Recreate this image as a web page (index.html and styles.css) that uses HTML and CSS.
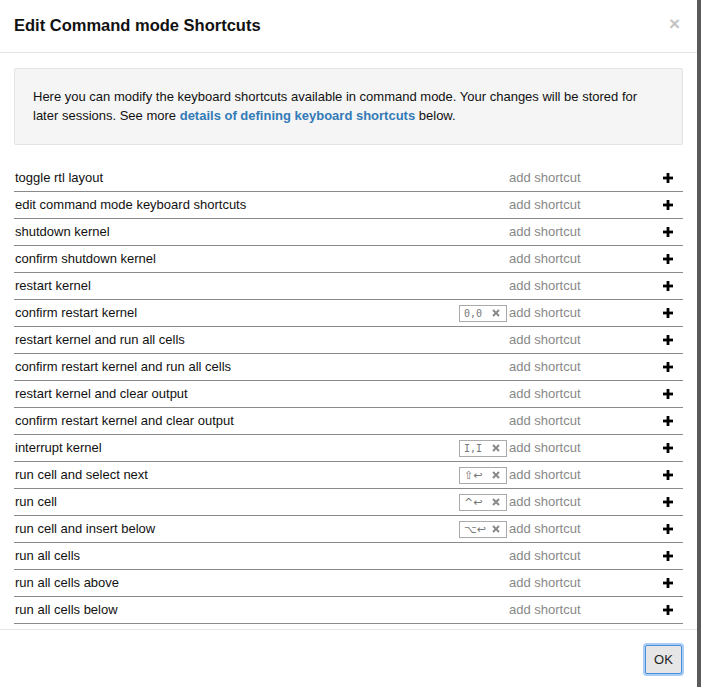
FILE: index.html
```html
<!DOCTYPE html>
<html>
<head>
<meta charset="utf-8">
<link rel="stylesheet" href="styles.css">
</head>
<body>
<div class="page">
  <div class="modal">
    <div class="modal-header">
      <h4 class="modal-title">Edit Command mode Shortcuts</h4>
      <span class="close">×</span>
    </div>
    <div class="modal-body">
      <div class="well">Here you can modify the keyboard shortcuts available in command mode. Your changes will be stored for later sessions. See more <a class="link">details of defining keyboard shortcuts</a> below.</div>
      <div class="list">
        <div class="row"><span class="desc">toggle rtl layout</span><span class="add">add shortcut</span><span class="plus"><svg viewBox="0 0 10 10" width="10" height="10"><rect x="3.6" y="0" width="2.8" height="10" fill="#000"/><rect x="0" y="3.6" width="10" height="2.8" fill="#000"/></svg></span></div>
        <div class="row"><span class="desc">edit command mode keyboard shortcuts</span><span class="add">add shortcut</span><span class="plus"><svg viewBox="0 0 10 10" width="10" height="10"><rect x="3.6" y="0" width="2.8" height="10" fill="#000"/><rect x="0" y="3.6" width="10" height="2.8" fill="#000"/></svg></span></div>
        <div class="row"><span class="desc">shutdown kernel</span><span class="add">add shortcut</span><span class="plus"><svg viewBox="0 0 10 10" width="10" height="10"><rect x="3.6" y="0" width="2.8" height="10" fill="#000"/><rect x="0" y="3.6" width="10" height="2.8" fill="#000"/></svg></span></div>
        <div class="row"><span class="desc">confirm shutdown kernel</span><span class="add">add shortcut</span><span class="plus"><svg viewBox="0 0 10 10" width="10" height="10"><rect x="3.6" y="0" width="2.8" height="10" fill="#000"/><rect x="0" y="3.6" width="10" height="2.8" fill="#000"/></svg></span></div>
        <div class="row"><span class="desc">restart kernel</span><span class="add">add shortcut</span><span class="plus"><svg viewBox="0 0 10 10" width="10" height="10"><rect x="3.6" y="0" width="2.8" height="10" fill="#000"/><rect x="0" y="3.6" width="10" height="2.8" fill="#000"/></svg></span></div>
        <div class="row"><span class="desc">confirm restart kernel</span><span class="key"><kbd>0,0</kbd><svg class="x" viewBox="0 0 8 8" width="8" height="8"><path d="M1 1L7 7M7 1L1 7" stroke="#8a8a8a" stroke-width="2"/></svg></span><span class="add">add shortcut</span><span class="plus"><svg viewBox="0 0 10 10" width="10" height="10"><rect x="3.6" y="0" width="2.8" height="10" fill="#000"/><rect x="0" y="3.6" width="10" height="2.8" fill="#000"/></svg></span></div>
        <div class="row"><span class="desc">restart kernel and run all cells</span><span class="add">add shortcut</span><span class="plus"><svg viewBox="0 0 10 10" width="10" height="10"><rect x="3.6" y="0" width="2.8" height="10" fill="#000"/><rect x="0" y="3.6" width="10" height="2.8" fill="#000"/></svg></span></div>
        <div class="row"><span class="desc">confirm restart kernel and run all cells</span><span class="add">add shortcut</span><span class="plus"><svg viewBox="0 0 10 10" width="10" height="10"><rect x="3.6" y="0" width="2.8" height="10" fill="#000"/><rect x="0" y="3.6" width="10" height="2.8" fill="#000"/></svg></span></div>
        <div class="row"><span class="desc">restart kernel and clear output</span><span class="add">add shortcut</span><span class="plus"><svg viewBox="0 0 10 10" width="10" height="10"><rect x="3.6" y="0" width="2.8" height="10" fill="#000"/><rect x="0" y="3.6" width="10" height="2.8" fill="#000"/></svg></span></div>
        <div class="row"><span class="desc">confirm restart kernel and clear output</span><span class="add">add shortcut</span><span class="plus"><svg viewBox="0 0 10 10" width="10" height="10"><rect x="3.6" y="0" width="2.8" height="10" fill="#000"/><rect x="0" y="3.6" width="10" height="2.8" fill="#000"/></svg></span></div>
        <div class="row"><span class="desc">interrupt kernel</span><span class="key"><kbd>I,I</kbd><svg class="x" viewBox="0 0 8 8" width="8" height="8"><path d="M1 1L7 7M7 1L1 7" stroke="#8a8a8a" stroke-width="2"/></svg></span><span class="add">add shortcut</span><span class="plus"><svg viewBox="0 0 10 10" width="10" height="10"><rect x="3.6" y="0" width="2.8" height="10" fill="#000"/><rect x="0" y="3.6" width="10" height="2.8" fill="#000"/></svg></span></div>
        <div class="row"><span class="desc">run cell and select next</span><span class="key"><kbd class="sym">⇧↩</kbd><svg class="x" viewBox="0 0 8 8" width="8" height="8"><path d="M1 1L7 7M7 1L1 7" stroke="#8a8a8a" stroke-width="2"/></svg></span><span class="add">add shortcut</span><span class="plus"><svg viewBox="0 0 10 10" width="10" height="10"><rect x="3.6" y="0" width="2.8" height="10" fill="#000"/><rect x="0" y="3.6" width="10" height="2.8" fill="#000"/></svg></span></div>
        <div class="row"><span class="desc">run cell</span><span class="key"><kbd class="sym">^↩</kbd><svg class="x" viewBox="0 0 8 8" width="8" height="8"><path d="M1 1L7 7M7 1L1 7" stroke="#8a8a8a" stroke-width="2"/></svg></span><span class="add">add shortcut</span><span class="plus"><svg viewBox="0 0 10 10" width="10" height="10"><rect x="3.6" y="0" width="2.8" height="10" fill="#000"/><rect x="0" y="3.6" width="10" height="2.8" fill="#000"/></svg></span></div>
        <div class="row"><span class="desc">run cell and insert below</span><span class="key"><kbd class="sym">⌥↩</kbd><svg class="x" viewBox="0 0 8 8" width="8" height="8"><path d="M1 1L7 7M7 1L1 7" stroke="#8a8a8a" stroke-width="2"/></svg></span><span class="add">add shortcut</span><span class="plus"><svg viewBox="0 0 10 10" width="10" height="10"><rect x="3.6" y="0" width="2.8" height="10" fill="#000"/><rect x="0" y="3.6" width="10" height="2.8" fill="#000"/></svg></span></div>
        <div class="row"><span class="desc">run all cells</span><span class="add">add shortcut</span><span class="plus"><svg viewBox="0 0 10 10" width="10" height="10"><rect x="3.6" y="0" width="2.8" height="10" fill="#000"/><rect x="0" y="3.6" width="10" height="2.8" fill="#000"/></svg></span></div>
        <div class="row"><span class="desc">run all cells above</span><span class="add">add shortcut</span><span class="plus"><svg viewBox="0 0 10 10" width="10" height="10"><rect x="3.6" y="0" width="2.8" height="10" fill="#000"/><rect x="0" y="3.6" width="10" height="2.8" fill="#000"/></svg></span></div>
        <div class="row"><span class="desc">run all cells below</span><span class="add">add shortcut</span><span class="plus"><svg viewBox="0 0 10 10" width="10" height="10"><rect x="3.6" y="0" width="2.8" height="10" fill="#000"/><rect x="0" y="3.6" width="10" height="2.8" fill="#000"/></svg></span></div>
      </div>
    </div>
    <div class="modal-footer">
      <button class="btn">OK</button>
    </div>
  </div>
</div>
</body>
</html>
```
FILE: styles.css
```css
html, body {
  margin: 0;
  padding: 0;
}
body {
  background: #5a5a5a;
  font-family: "Liberation Sans", Arial, sans-serif;
  font-size: 13px;
  line-height: 1.42857;
  color: #222;
}
.page {
  width: 701px;
  height: 687px;
  overflow: hidden;
  display: flex;
}
.modal {
  width: 697px;
  height: 687px;
  background: #fff;
  display: flex;
  flex-direction: column;
}
.modal-header {
  display: flex;
  justify-content: space-between;
  align-items: flex-start;
  padding: 12px 15px 14px 14px;
  border-bottom: 1px solid #e5e5e5;
}
.modal-title {
  margin: 0;
  font-size: 16.5px;
  line-height: 26px;
  font-weight: bold;
  color: #111;
}
.close {
  font-size: 19px;
  font-weight: bold;
  line-height: 20px;
  color: #c4c4c4;
  margin-top: 2px;
  margin-right: 2px;
}
.modal-body {
  padding: 15px 14px 5px 14px;
}
.well {
  background: #f5f5f5;
  border: 1px solid #e3e3e3;
  border-radius: 2px;
  padding: 19px 19px 19px 18px;
  margin-bottom: 20px;
  color: #111;
}
.link {
  color: #337ab7;
  font-weight: bold;
}
.row {
  display: flex;
  align-items: center;
  height: 26px;
  border-bottom: 1px solid #8a8a8a;
  padding-left: 1px;
  color: #111;
}
.desc {
  flex: 1;
}
.key {
  display: flex;
  align-items: center;
  justify-content: space-between;
  box-sizing: border-box;
  width: 48px;
  height: 17px;
  border: 1px solid #aaa;
  padding: 0 6px 0 4px;
  margin-right: 2px;
}
kbd {
  font-family: "DejaVu Sans Mono", "DejaVu Sans", monospace;
  font-size: 10px;
  color: #777;
  line-height: 15px;
}
kbd.sym {
  font-family: "DejaVu Sans", sans-serif;
  font-size: 11px;
}
.add {
  width: 154px;
  color: #888;
}
.plus {
  width: 14px;
  margin-right: 6px;
  display: flex;
  align-items: center;
}
.modal-footer {
  border-top: 1px solid #e5e5e5;
  padding: 15px 15px;
  display: flex;
  justify-content: flex-end;
}
.btn {
  width: 37px;
  height: 29px;
  background: #e6e6e6;
  border: 1px solid #4a90d9;
  border-radius: 2px;
  box-shadow: 0 0 0 2px rgba(110, 170, 240, 0.6);
  font-family: "Liberation Sans", Arial, sans-serif;
  font-size: 13px;
  color: #222;
  padding: 0;
}
```
